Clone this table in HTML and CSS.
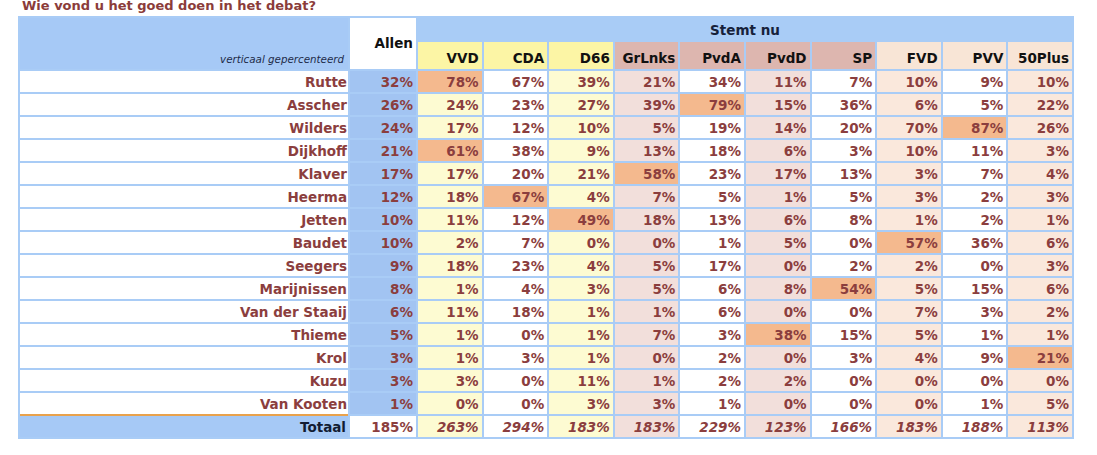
FILE: index.html
```html
<!DOCTYPE html>
<html lang="nl">
<head>
<meta charset="utf-8">
<title>Wie vond u het goed doen in het debat?</title>
<link rel="stylesheet" href="styles.css">
</head>
<body>
<h1 class="title">Wie vond u het goed doen in het debat?</h1>
<table class="grid">
  <colgroup>
    <col class="c-name"><col class="c-allen">
    <col><col><col><col><col><col><col><col><col><col>
  </colgroup>
  <thead>
    <tr class="r-top">
      <th class="corner" rowspan="2"><span class="note">verticaal gepercenteerd</span></th>
      <th class="allen-h" rowspan="2">Allen</th>
      <th class="stemt" colspan="10">Stemt nu</th>
    </tr>
    <tr class="r-party">
      <th class="hy">VVD</th><th class="hy">CDA</th><th class="hy">D66</th>
      <th class="hp">GrLnks</th><th class="hp">PvdA</th><th class="hp">PvdD</th><th class="hp">SP</th>
      <th class="hc">FVD</th><th class="hc">PVV</th><th class="hc">50Plus</th>
    </tr>
  </thead>
  <tbody>
    <tr><th class="name">Rutte</th><td class="al">32%</td><td class="y hi">78%</td><td class="w">67%</td><td class="y">39%</td><td class="p">21%</td><td class="w">34%</td><td class="p">11%</td><td class="w">7%</td><td class="c">10%</td><td class="w">9%</td><td class="c">10%</td></tr>
    <tr><th class="name">Asscher</th><td class="al">26%</td><td class="y">24%</td><td class="w">23%</td><td class="y">27%</td><td class="p">39%</td><td class="w hi">79%</td><td class="p">15%</td><td class="w">36%</td><td class="c">6%</td><td class="w">5%</td><td class="c">22%</td></tr>
    <tr><th class="name">Wilders</th><td class="al">24%</td><td class="y">17%</td><td class="w">12%</td><td class="y">10%</td><td class="p">5%</td><td class="w">19%</td><td class="p">14%</td><td class="w">20%</td><td class="c">70%</td><td class="w hi">87%</td><td class="c">26%</td></tr>
    <tr><th class="name">Dijkhoff</th><td class="al">21%</td><td class="y hi">61%</td><td class="w">38%</td><td class="y">9%</td><td class="p">13%</td><td class="w">18%</td><td class="p">6%</td><td class="w">3%</td><td class="c">10%</td><td class="w">11%</td><td class="c">3%</td></tr>
    <tr><th class="name">Klaver</th><td class="al">17%</td><td class="y">17%</td><td class="w">20%</td><td class="y">21%</td><td class="p hi">58%</td><td class="w">23%</td><td class="p">17%</td><td class="w">13%</td><td class="c">3%</td><td class="w">7%</td><td class="c">4%</td></tr>
    <tr><th class="name">Heerma</th><td class="al">12%</td><td class="y">18%</td><td class="w hi">67%</td><td class="y">4%</td><td class="p">7%</td><td class="w">5%</td><td class="p">1%</td><td class="w">5%</td><td class="c">3%</td><td class="w">2%</td><td class="c">3%</td></tr>
    <tr><th class="name">Jetten</th><td class="al">10%</td><td class="y">11%</td><td class="w">12%</td><td class="y hi">49%</td><td class="p">18%</td><td class="w">13%</td><td class="p">6%</td><td class="w">8%</td><td class="c">1%</td><td class="w">2%</td><td class="c">1%</td></tr>
    <tr><th class="name">Baudet</th><td class="al">10%</td><td class="y">2%</td><td class="w">7%</td><td class="y">0%</td><td class="p">0%</td><td class="w">1%</td><td class="p">5%</td><td class="w">0%</td><td class="c hi">57%</td><td class="w">36%</td><td class="c">6%</td></tr>
    <tr><th class="name">Seegers</th><td class="al">9%</td><td class="y">18%</td><td class="w">23%</td><td class="y">4%</td><td class="p">5%</td><td class="w">17%</td><td class="p">0%</td><td class="w">2%</td><td class="c">2%</td><td class="w">0%</td><td class="c">3%</td></tr>
    <tr><th class="name">Marijnissen</th><td class="al">8%</td><td class="y">1%</td><td class="w">4%</td><td class="y">3%</td><td class="p">5%</td><td class="w">6%</td><td class="p">8%</td><td class="w hi">54%</td><td class="c">5%</td><td class="w">15%</td><td class="c">6%</td></tr>
    <tr><th class="name">Van der Staaij</th><td class="al">6%</td><td class="y">11%</td><td class="w">18%</td><td class="y">1%</td><td class="p">1%</td><td class="w">6%</td><td class="p">0%</td><td class="w">0%</td><td class="c">7%</td><td class="w">3%</td><td class="c">2%</td></tr>
    <tr><th class="name">Thieme</th><td class="al">5%</td><td class="y">1%</td><td class="w">0%</td><td class="y">1%</td><td class="p">7%</td><td class="w">3%</td><td class="p hi">38%</td><td class="w">15%</td><td class="c">5%</td><td class="w">1%</td><td class="c">1%</td></tr>
    <tr><th class="name">Krol</th><td class="al">3%</td><td class="y">1%</td><td class="w">3%</td><td class="y">1%</td><td class="p">0%</td><td class="w">2%</td><td class="p">0%</td><td class="w">3%</td><td class="c">4%</td><td class="w">9%</td><td class="c hi">21%</td></tr>
    <tr><th class="name">Kuzu</th><td class="al">3%</td><td class="y">3%</td><td class="w">0%</td><td class="y">11%</td><td class="p">1%</td><td class="w">2%</td><td class="p">2%</td><td class="w">0%</td><td class="c">0%</td><td class="w">0%</td><td class="c">0%</td></tr>
    <tr><th class="name last">Van Kooten</th><td class="al">1%</td><td class="y">0%</td><td class="w">0%</td><td class="y">3%</td><td class="p">3%</td><td class="w">1%</td><td class="p">0%</td><td class="w">0%</td><td class="c">0%</td><td class="w">1%</td><td class="c">5%</td></tr>
  </tbody>
  <tfoot>
    <tr class="total"><th class="tot-label">Totaal</th><td class="w al-tot">185%</td><td class="y">263%</td><td class="w">294%</td><td class="y">183%</td><td class="p">183%</td><td class="w">229%</td><td class="p">123%</td><td class="w">166%</td><td class="c">183%</td><td class="w">188%</td><td class="c">113%</td></tr>
  </tfoot>
</table>
</body>
</html>
```

FILE: styles.css
```css
html, body {
  margin: 0;
  padding: 0;
  background: #ffffff;
}

body {
  font-family: "DejaVu Sans", Verdana, sans-serif;
  font-size: 13px;
  color: #8b3e3e;
  overflow: hidden;
}

.title {
  margin: -1px 0 0 0;
  padding-left: 22px;
  font-size: 13px;
  line-height: 13px;
  font-weight: bold;
  color: #8b3c3a;
}

.grid {
  margin: 4px 0 0 18px;
  width: 1056px;
  table-layout: fixed;
  border-collapse: separate;
  border-spacing: 2px;
  background: #a9ccf6;
  font-size: 13.5px;
}

.c-name { width: 328px; }
.c-allen { width: 66px; }

.grid th,
.grid td {
  box-sizing: border-box;
  padding: 0 3px 0 0;
  text-align: right;
  font-weight: bold;
  white-space: nowrap;
  overflow: hidden;
}

/* header */
.r-top th { height: 22px; }
.r-party th { height: 27px; }

.corner {
  background: #a6c9f6;
  vertical-align: bottom;
  padding: 0 4px 3px 0 !important;
}

.note {
  font-size: 10.3px;
  font-style: italic;
  font-weight: normal;
  color: #1e2c4a;
}

.allen-h {
  background: #ffffff;
  color: #111111;
  vertical-align: middle;
  padding-bottom: 2px !important;
}

.stemt {
  text-align: center !important;
  color: #16213a;
  vertical-align: middle;
  padding: 2px 0 0 0 !important;
}

.r-party th {
  color: #111111;
  vertical-align: middle;
  padding-top: 4px !important;
}

.hy { background: #fcf5a5; }
.hp { background: #ddb6af; }
.hc { background: #f8e5d6; }

/* body */
tbody th,
tbody td,
tfoot th,
tfoot td {
  height: 21px;
  vertical-align: middle;
  padding-top: 1px !important;
}

.name {
  background: #ffffff;
  color: #8b3e3e;
  padding-right: 1px !important;
}

.name.last {
  box-shadow: 0 2px 0 #e9a24c;
}

.al { background: #a2c4f2; }
.y { background: #fdfbd2; }
.w { background: #ffffff; }
.p { background: #f2dfdb; }
.c { background: #fae8dc; }
.hi { background: #f4b98e; }

.tot-label {
  background: #a6c9f6;
  color: #131c33;
  padding-right: 2px !important;
}

.total td {
  font-style: italic;
}

.total td.al-tot {
  font-style: normal;
}
```
